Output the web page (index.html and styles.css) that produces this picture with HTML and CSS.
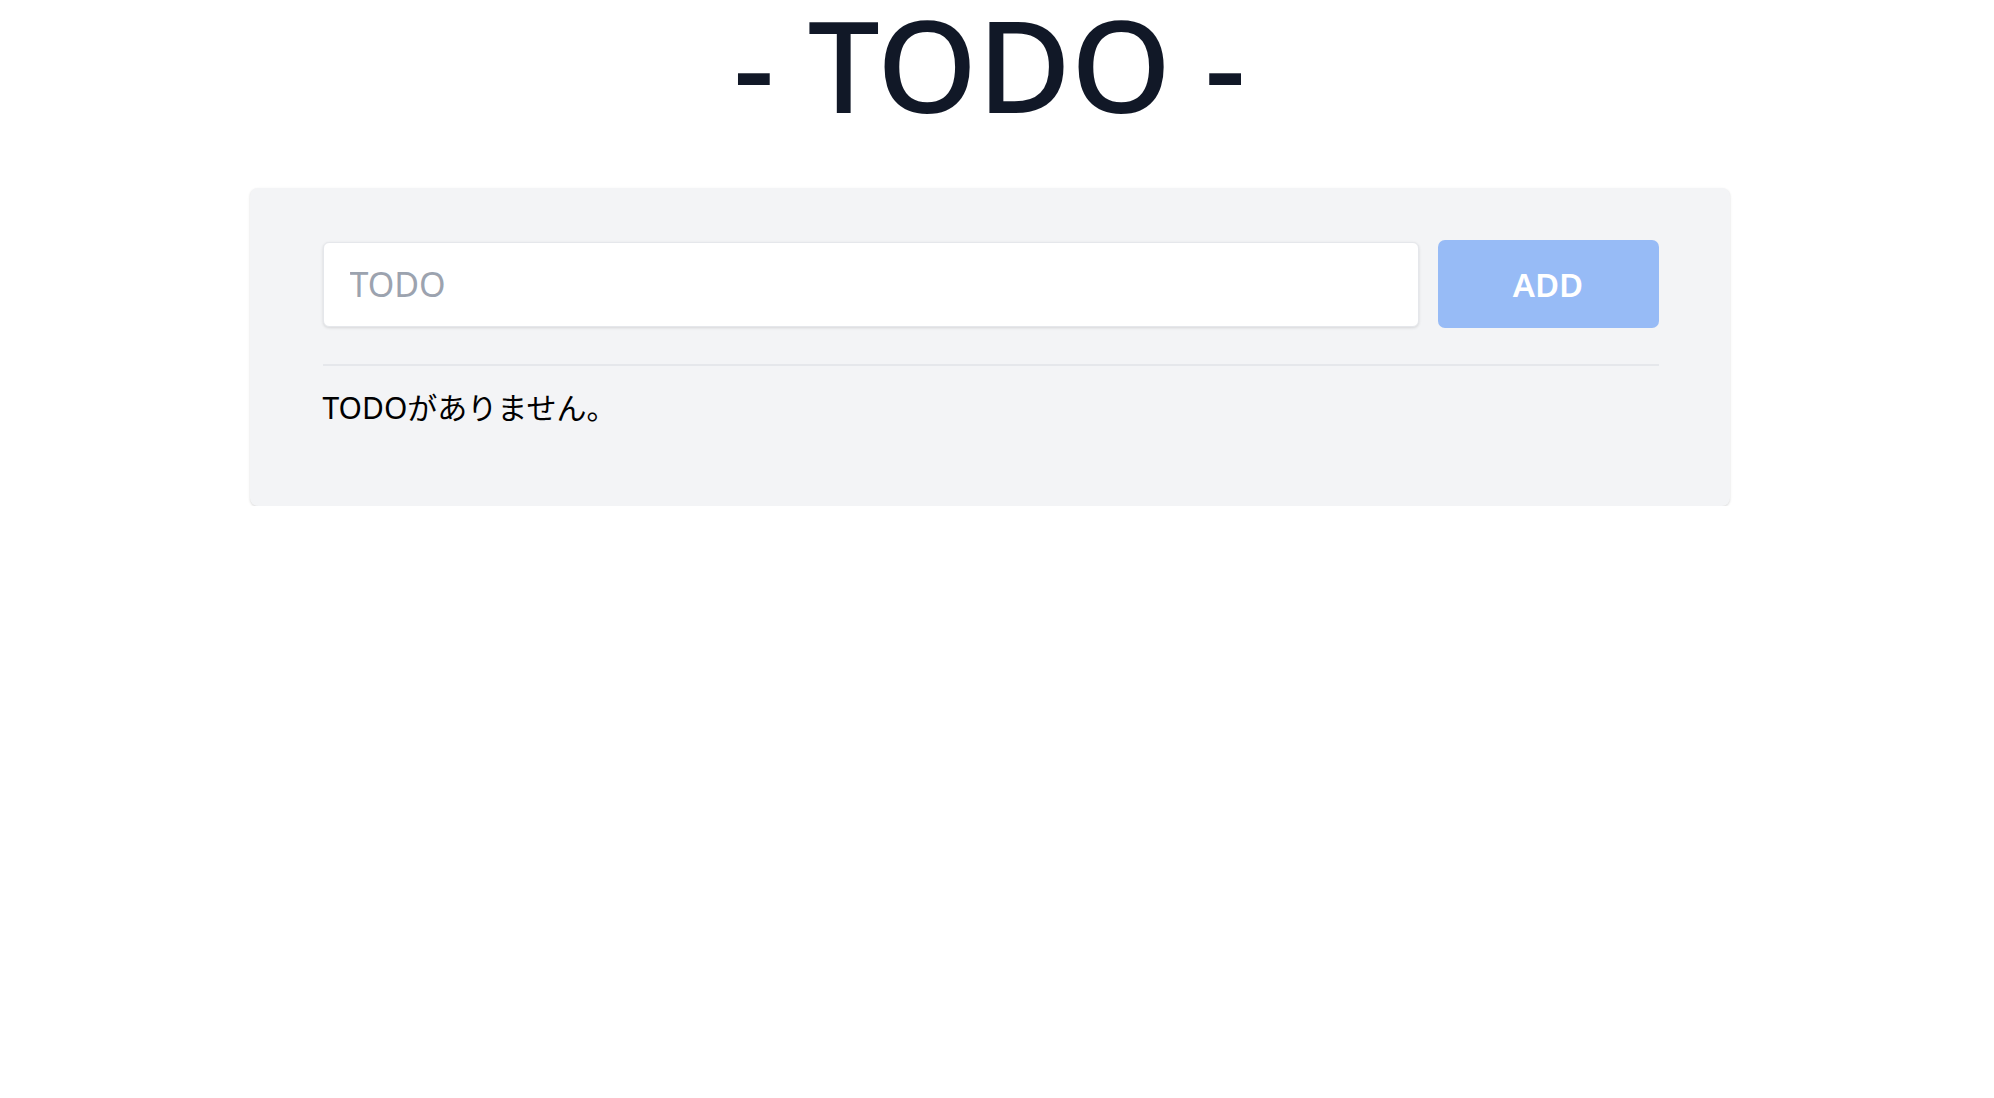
FILE: index.html
```html
<!DOCTYPE html>
<html lang="ja">
<head>
<meta charset="utf-8">
<title>TODO</title>
<link rel="stylesheet" href="styles.css">
</head>
<body>
<div class="page">
  <h1 class="title">- TODO -</h1>
  <div class="card">
    <form class="add-row" onsubmit="return false;">
      <input class="todo-input" type="text" placeholder="TODO">
      <button class="add-btn" type="submit" disabled>ADD</button>
    </form>
    <hr class="divider">
    <p class="empty">TODOがありません。</p>
  </div>
</div>
</body>
</html>
```

FILE: styles.css
```css
html, body {
  margin: 0;
  padding: 0;
  background: #ffffff;
}

.page {
  width: 1979px;
  font-family: "Noto Sans", "Noto Sans CJK JP", sans-serif;
}

.title {
  margin: 0;
  padding: 0;
  text-align: center;
  font-family: "Noto Sans", sans-serif;
  font-weight: 500;
  font-size: 128px;
  line-height: 128px;
  color: #111827;
}

.card {
  box-sizing: border-box;
  width: 1480px;
  margin: 60px auto 0;
  padding: 52px 71px 76px 73px;
  background: #f3f4f6;
  border-radius: 8px;
  box-shadow: 0 1px 3px rgba(0,0,0,0.10), 0 1px 2px rgba(0,0,0,0.06);
}

.add-row {
  display: flex;
  align-items: center;
  gap: 19px;
  margin: 0;
}

.todo-input {
  flex: 1;
  box-sizing: border-box;
  height: 85px;
  padding: 0 26px;
  border: 1px solid #e5e7eb;
  border-radius: 6px;
  background: #ffffff;
  box-shadow: 0 1px 3px rgba(0,0,0,0.12);
  font-family: "Noto Sans", sans-serif;
  font-size: 34px;
  color: #111827;
  outline: none;
}

.todo-input::placeholder {
  color: #9ca3af;
}

.add-btn {
  box-sizing: border-box;
  width: 221px;
  height: 88px;
  border: none;
  border-radius: 7px;
  background: #97bbf6;
  color: #ffffff;
  font-family: "Noto Sans", sans-serif;
  font-weight: 600;
  font-size: 33px;
  padding: 0;
}

.divider {
  margin: 36px 0 0;
  border: none;
  border-top: 2px solid #e5e7eb;
}

.empty {
  margin: 20px 0 0;
  font-size: 30px;
  line-height: 44px;
  color: #000000;
}
```
